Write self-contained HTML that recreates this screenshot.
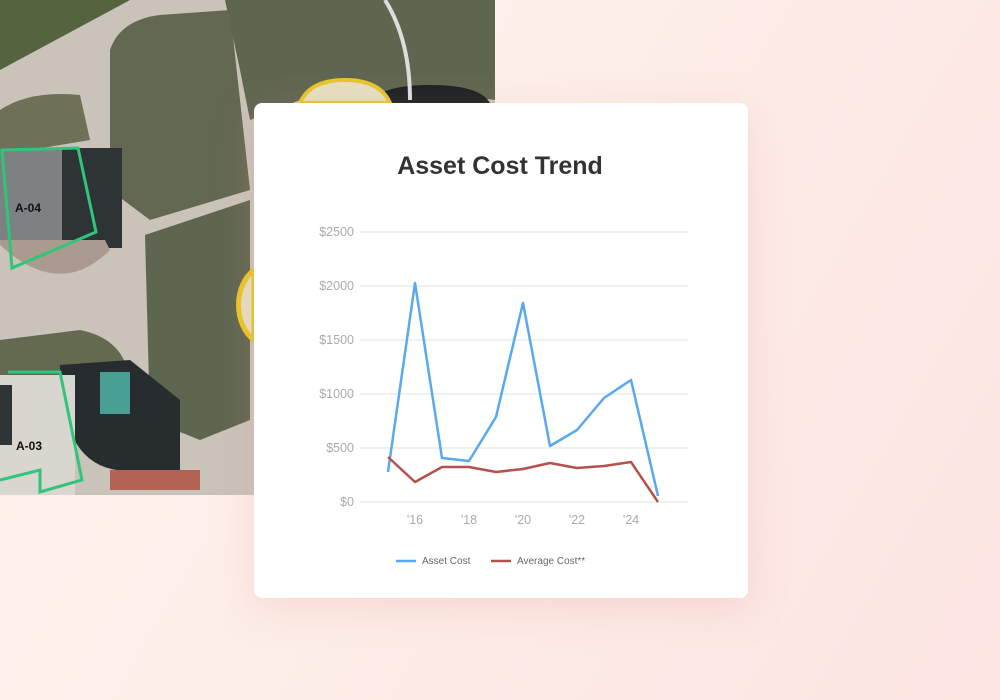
<!DOCTYPE html>
<html><head><meta charset="utf-8"><style>
body{margin:0;width:1000px;height:700px;overflow:hidden;background:linear-gradient(120deg,#fdf3ec 0%,#fdeee8 45%,#fce4e1 100%);font-family:"Liberation Sans",sans-serif;position:relative}
.aer{position:absolute;left:0;top:0;width:495px;height:495px}
.card{position:absolute;left:254px;top:103px;width:494px;height:495px;background:#fff;border-radius:8px;box-shadow:0 10px 40px rgba(230,150,140,.25)}
h1{position:absolute;left:0;right:0;top:152px;margin:0;text-align:center;font-size:25px;font-weight:bold;color:#333}
</style></head><body>
<svg class="aer" viewBox="0 0 495 495">
<rect width="495" height="495" fill="#c9c3b9"/>
<path d="M0 0H130L0 70Z" fill="#55643f"/>
<path d="M110 50Q120 20 160 15L230 10L250 190L150 220L110 190Z" fill="#626852"/>
<path d="M225 0H495V100L420 90L300 100L250 120L240 70Z" fill="#5f6650"/>
<path d="M145 235L250 200V420L200 440L150 420Z" fill="#5e6650"/>
<path d="M0 110Q30 90 80 95L90 140L30 150L0 150Z" fill="#6e7158"/>
<path d="M0 340L80 330Q130 340 130 390L120 420L0 420Z" fill="#646a50"/>
<rect x="0" y="150" width="90" height="90" fill="#7d8182"/>
<rect x="62" y="148" width="60" height="100" fill="#2e3335"/>
<path d="M0 245Q60 300 110 250L105 240H0Z" fill="#ab9a8f"/>
<path d="M2 150L78 148L96 232L12 268Z" fill="none" stroke="#2fc57a" stroke-width="3"/>
<text x="15" y="212" font-size="12" font-weight="bold" fill="#111">A-04</text>
<path d="M60 365Q60 480 140 470L180 470V400L130 360Z" fill="#272c2e"/>
<rect x="0" y="375" width="75" height="120" fill="#d9d6d0"/>
<rect x="0" y="385" width="12" height="60" fill="#2e3334"/>
<rect x="100" y="372" width="30" height="42" fill="#4a9f95"/>
<path d="M8 372H60L82 480L40 492V470L0 480" fill="none" stroke="#2fc57a" stroke-width="3"/>
<text x="16" y="450" font-size="12" font-weight="bold" fill="#111">A-03</text>
<rect x="110" y="470" width="90" height="20" fill="#b46253"/>
<path d="M370 103Q380 85 430 85Q480 85 490 103Z" fill="#1d2224"/>
<path d="M300 103Q310 80 345 80Q380 80 390 103Z" fill="#e6dfc2" stroke="#e6c62a" stroke-width="4"/>
<path d="M254 270A30 40 0 0 0 254 340Z" fill="#e6dfc2" stroke="#e6c62a" stroke-width="5"/>
<path d="M385 0Q410 40 410 100" fill="none" stroke="#ddd" stroke-width="4"/>
</svg>
<div class="card"></div>
<h1>Asset Cost Trend</h1>
<svg style="position:absolute;left:0;top:0" width="1000" height="700">
<g stroke="#ececec" stroke-width="1.5">
<line x1="360" y1="232" x2="688" y2="232"/><line x1="360" y1="286" x2="688" y2="286"/><line x1="360" y1="340" x2="688" y2="340"/><line x1="360" y1="394" x2="688" y2="394"/><line x1="360" y1="448" x2="688" y2="448"/><line x1="360" y1="502" x2="688" y2="502"/>
</g>
<g font-family="Liberation Sans,sans-serif" font-size="12.5" fill="#aaa" text-anchor="end">
<text x="354" y="236">$2500</text><text x="354" y="290">$2000</text><text x="354" y="344">$1500</text><text x="354" y="398">$1000</text><text x="354" y="452">$500</text><text x="354" y="506">$0</text>
</g>
<g font-family="Liberation Sans,sans-serif" font-size="12.5" fill="#aaa" text-anchor="middle">
<text x="415" y="524">'16</text><text x="469" y="524">'18</text><text x="523" y="524">'20</text><text x="577" y="524">'22</text><text x="631" y="524">'24</text>
</g>
<polyline fill="none" stroke="#58a8f2" stroke-width="2.5" stroke-linejoin="round" points="388,472 415,283 442,458 469,461 496,417 523,303 550,446 577,430 604,398 631,380 658,496"/>
<polyline fill="none" stroke="#b5504d" stroke-width="2.5" stroke-linejoin="round" points="388,457 415,482 442,467 469,467 496,472 523,469 550,463 577,468 604,466 631,462 658,502"/>
<line x1="396" y1="561" x2="416" y2="561" stroke="#58a8f2" stroke-width="2.5"/>
<line x1="491" y1="561" x2="511" y2="561" stroke="#b5504d" stroke-width="2.5"/>
<g font-family="Liberation Sans,sans-serif" font-size="10" fill="#666">
<text x="422" y="564">Asset Cost</text><text x="517" y="564">Average Cost**</text>
</g>
</svg>
</body></html>
